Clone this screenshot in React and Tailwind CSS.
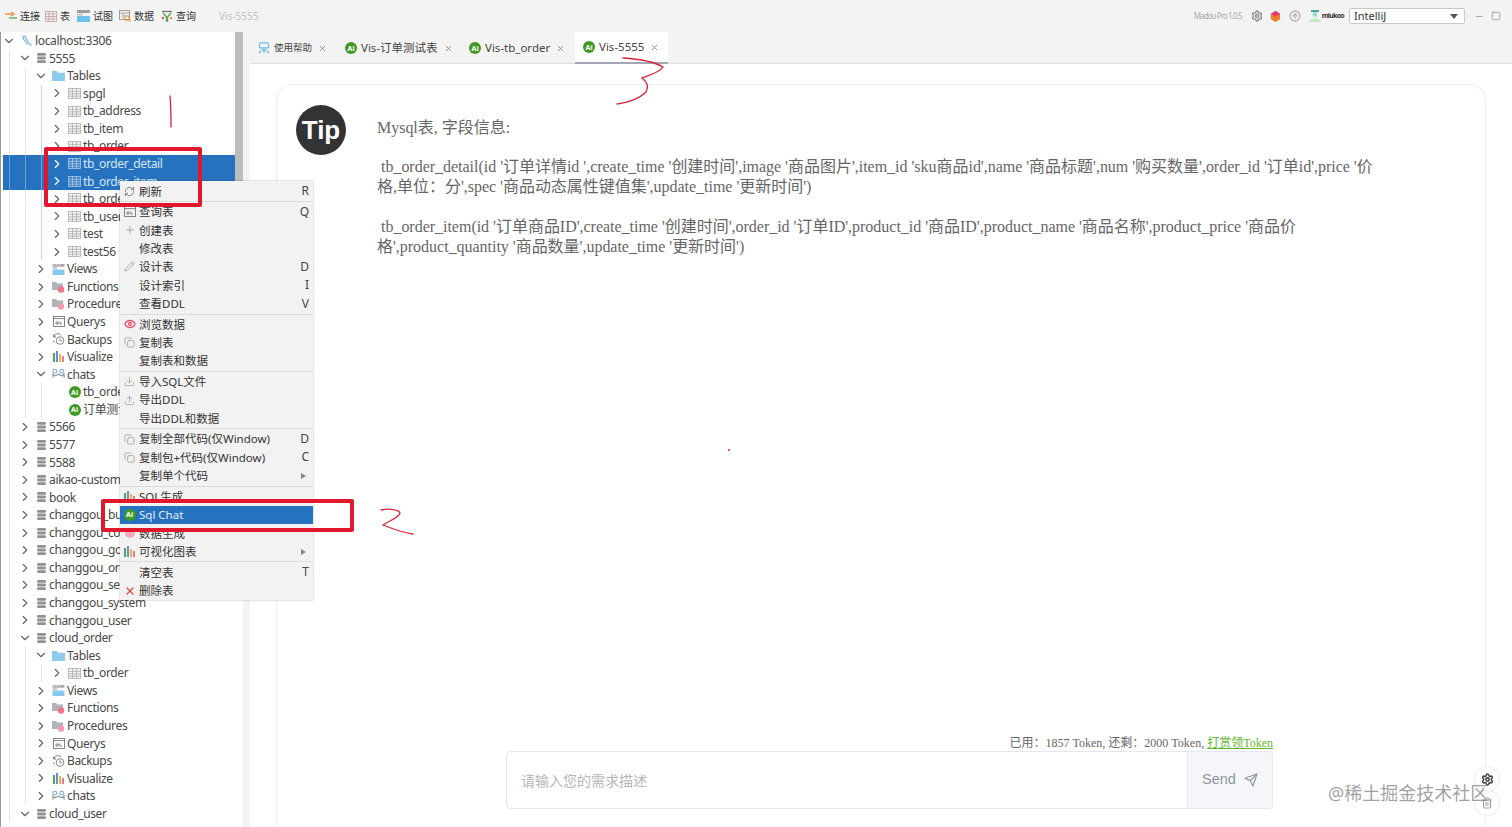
import {
  ArrowUpCircle,
  ChevronDown,
  ChevronRight,
  Copy,
  Download,
  Eye,
  Minus,
  Pencil,
  Plus,
  RefreshCw,
  Send,
  Settings,
  Square,
  Trash2,
  Upload,
  X,
} from "lucide-react";

const AiBadge = ({ size = "w-3 h-3" }) => (
  <span className={`${size} rounded-full bg-[#3f9a23] text-white text-[7px] font-bold leading-none flex items-center justify-center shrink-0`}>
    Ai
  </span>
);

const TableIcon = ({ selected }) => (
  <svg viewBox="0 0 13 11" className="w-[13px] h-[11px]" fill="none" stroke={selected ? "#a9c6e4" : "#adadad"} strokeWidth="0.8">
    <rect x="0.5" y="0.5" width="12" height="10" fill={selected ? "#3f82c6" : "#f4f4f4"} />
    <path d="M0.5 3.3h12M0.5 5.8h12M0.5 8.2h12M4.5 0.5v10M8.5 0.5v10" />
  </svg>
);

const DbIcon = () => (
  <svg viewBox="0 0 9 12" className="w-[9px] h-3 -ml-[2px]" fill="#929292">
    <rect x="0" y="1" width="9" height="2.8" rx="1.3" />
    <rect x="0" y="4.6" width="9" height="2.8" rx="1.3" />
    <rect x="0" y="8.2" width="9" height="2.8" rx="1.3" />
  </svg>
);

const FolderIcon = () => (
  <svg viewBox="0 0 14 12" className="w-[13px] h-[11px]" fill="#8ccbec">
    <path d="M0 1h5l1.5 2H14v9H0z" />
  </svg>
);

const ViewsIcon = () => (
  <svg viewBox="0 0 13 12" className="w-[13px] h-[11px]">
    <rect width="13" height="3" fill="#a8a8a8" />
    <path d="M1 1h1.5M4 1h1.5M7 1h1.5" stroke="#fff" strokeWidth="1" />
    <rect y="3.5" width="5" height="2" fill="#c4c4c4" />
    <rect y="6" width="13" height="6" fill="#86cbee" />
  </svg>
);

const DotFolderIcon = ({ letter }) => (
  <svg viewBox="0 0 13 12" className="w-[13px] h-[12px]">
    <path d="M0 1h4l1.5 1.5H11V9H0z" fill="#aeb4ba" />
    <circle cx="9" cy="8.5" r="3.2" fill={letter === "f" ? "#f0738a" : "#f49aaa"} />
  </svg>
);

const QueryIcon = () => (
  <svg viewBox="0 0 12 11" className="w-3 h-[11px]" fill="none" stroke="#777" strokeWidth="0.9">
    <rect x="0.5" y="0.5" width="11" height="10" />
    <path d="M0.5 2.6h11M3 6h2.2v2H3zM7 5.4V8h2" />
  </svg>
);

const BackupIcon = () => (
  <svg viewBox="0 0 13 12" className="w-[13px] h-3" fill="none" stroke="#777" strokeWidth="0.9">
    <path d="M2 4a4 4 0 0 1 7-2M1.5 1.5V4H4" />
    <circle cx="8" cy="7.5" r="3.8" />
    <path d="M8 5.4v2.3h1.8M1.5 7.5a4 4 0 0 0 1 2" />
  </svg>
);

const ChartIcon = () => (
  <svg viewBox="0 0 12 11" className="w-3 h-[11px]">
    <rect x="0" y="2" width="2" height="9" fill="#4aa564" />
    <rect x="3" y="0" width="2" height="11" fill="#6d8bd0" />
    <rect x="6" y="3" width="2" height="8" fill="#efb04c" />
    <rect x="9" y="5" width="2" height="6" fill="#e77b8f" />
  </svg>
);

const ChatsIcon = () => (
  <svg viewBox="0 0 14 12" className="w-[13px] h-3" fill="none" strokeWidth="1.1">
    <circle cx="3" cy="3" r="2" stroke="#7aa5d8" />
    <circle cx="10.5" cy="3" r="2" stroke="#7aa5d8" />
    <path d="M1 10V6l2.5 2L7 6l3 2 3-2v4" stroke="#7d8b99" />
  </svg>
);

const HostIcon = () => (
  <svg viewBox="0 0 12 12" className="w-3 h-3" fill="none" stroke="#6fa9dd" strokeWidth="1.1">
    <path d="M1.5 1.5 4 1l3.5 7 3 2.5M1.5 1.5 3 4.5l3.5 5" />
  </svg>
);

const treeIcon = (row) => {
  switch (row.icon) {
    case "host":
      return <HostIcon />;
    case "db":
      return <DbIcon />;
    case "folder":
      return <FolderIcon />;
    case "table":
      return <TableIcon selected={row.selected} />;
    case "views":
      return <ViewsIcon />;
    case "func":
      return <DotFolderIcon letter="f" />;
    case "proc":
      return <DotFolderIcon letter="p" />;
    case "query":
      return <QueryIcon />;
    case "backup":
      return <BackupIcon />;
    case "chart":
      return <ChartIcon />;
    case "chats":
      return <ChatsIcon />;
    default:
      return <AiBadge />;
  }
};

// gap between icon and label for each tree depth
const labelGap = ["ml-[2px]", "ml-0", "ml-[2px]", "ml-[2px]"];

const folderChildren = (tablesOpen) => [
  { level: 2, label: "Views", icon: "views" },
  { level: 2, label: "Functions", icon: "func" },
  { level: 2, label: "Procedures", icon: "proc" },
  { level: 2, label: "Querys", icon: "query" },
  { level: 2, label: "Backups", icon: "backup" },
  { level: 2, label: "Visualize", icon: "chart" },
  { level: 2, label: "chats", icon: "chats", open: tablesOpen },
];

const treeRows = [
  { level: 0, label: "localhost:3306", icon: "host", open: true },
  { level: 1, label: "5555", icon: "db", open: true },
  { level: 2, label: "Tables", icon: "folder", open: true },
  { level: 3, label: "spgl", icon: "table", blue: true },
  { level: 3, label: "tb_address", icon: "table", blue: true },
  { level: 3, label: "tb_item", icon: "table", blue: true },
  { level: 3, label: "tb_order", icon: "table", blue: true },
  { level: 3, label: "tb_order_detail", icon: "table", blue: true, selected: true },
  { level: 3, label: "tb_order_item", icon: "table", blue: true, selected: true },
  { level: 3, label: "tb_order_log", icon: "table", blue: true },
  { level: 3, label: "tb_user", icon: "table", blue: true },
  { level: 3, label: "test", icon: "table", blue: true },
  { level: 3, label: "test56", icon: "table", blue: true },
  ...folderChildren(true),
  { level: 3, label: "tb_order", icon: "ai", leaf: true },
  { level: 3, label: "订单测试表", icon: "ai", leaf: true },
  { level: 1, label: "5566", icon: "db" },
  { level: 1, label: "5577", icon: "db" },
  { level: 1, label: "5588", icon: "db" },
  { level: 1, label: "aikao-customer", icon: "db" },
  { level: 1, label: "book", icon: "db" },
  { level: 1, label: "changgou_business", icon: "db" },
  { level: 1, label: "changgou_content", icon: "db" },
  { level: 1, label: "changgou_goods", icon: "db" },
  { level: 1, label: "changgou_order", icon: "db" },
  { level: 1, label: "changgou_seckill", icon: "db" },
  { level: 1, label: "changgou_system", icon: "db" },
  { level: 1, label: "changgou_user", icon: "db" },
  { level: 1, label: "cloud_order", icon: "db", open: true },
  { level: 2, label: "Tables", icon: "folder", open: true },
  { level: 3, label: "tb_order", icon: "table" },
  ...folderChildren(false),
  { level: 1, label: "cloud_user", icon: "db", open: true },
];

const TreeRow = ({ row }) => {
  const Chevron = row.open ? ChevronDown : ChevronRight;
  return (
    <div
      className={`flex items-stretch h-[17.57px] pl-[6px] shrink-0 ${
        row.selected ? "bg-[#2672bf] text-[#d5e6f7]" : "text-[#484848]"
      }`}
    >
      {Array.from({ length: row.level }).map((_, i) => (
        <span
          key={i}
          className={`w-4 border-l ${
            row.selected
              ? "border-[#6fa3d8]"
              : row.blue && i === 2
              ? "border-[#bcdcf3]"
              : "border-[#e6e6e6]"
          }`}
        />
      ))}
      <span className="w-4 -ml-2 flex items-center justify-center shrink-0">
        {!row.leaf && (
          <Chevron
            size={14}
            strokeWidth={2}
            className={row.selected ? "text-white" : "text-[#666]"}
          />
        )}
      </span>
      <span className="ml-[3px] w-[13px] flex items-center justify-center shrink-0">
        {treeIcon(row)}
      </span>
      <span className={`${labelGap[row.level]} text-[12px] tracking-[-0.35px] leading-[17px] whitespace-nowrap`}>
        {row.label}
      </span>
    </div>
  );
};

const Separator = () => (
  <div className="h-[2.2px] flex items-center">
    <div className="h-px w-full bg-[#dcdcdc]" />
  </div>
);

const menuGroups = [
  [{ label: "刷新", key: "R", icon: <RefreshCw size={11} className="text-[#777]" /> }],
  [
    { label: "查询表", key: "Q", icon: <QueryIcon /> },
    { label: "创建表", icon: <Plus size={12} className="text-[#aaa]" /> },
    { label: "修改表" },
    { label: "设计表", key: "D", icon: <Pencil size={11} className="text-[#aaa]" /> },
    { label: "设计索引", key: "I" },
    { label: "查看DDL", key: "V" },
  ],
  [
    { label: "浏览数据", icon: <Eye size={12} className="text-[#e0566f]" strokeWidth={2.6} /> },
    { label: "复制表", icon: <Copy size={11} className="text-[#aaa]" /> },
    { label: "复制表和数据" },
  ],
  [
    { label: "导入SQL文件", icon: <Download size={11} className="text-[#aaa]" /> },
    { label: "导出DDL", icon: <Upload size={11} className="text-[#aaa]" /> },
    { label: "导出DDL和数据" },
  ],
  [
    { label: "复制全部代码(仅Window)", key: "D", icon: <Copy size={11} className="text-[#aaa]" /> },
    { label: "复制包+代码(仅Window)", key: "C", icon: <Copy size={11} className="text-[#aaa]" /> },
    { label: "复制单个代码", sub: true },
  ],
  [
    { label: "SQL生成", icon: <ChartIcon /> },
    { label: "Sql Chat", active: true, icon: <AiBadge /> },
    { label: "数据生成", icon: <span className="w-2.5 h-2.5 rounded-full bg-[#f0a9bb]" /> },
    { label: "可视化图表", sub: true, icon: <ChartIcon /> },
  ],
  [
    { label: "清空表", key: "T" },
    { label: "删除表", icon: <X size={12} strokeWidth={2.6} className="text-[#d9453f]" /> },
  ],
];

const MenuItem = ({ item }) => (
  <div
    className={`flex items-center h-[18.4px] text-[11.5px] ${
      item.active ? "bg-[#2672bf] text-[#e2eefa]" : "text-[#333]"
    }`}
  >
    <span className="w-[19px] flex items-center justify-center shrink-0">{item.icon}</span>
    <span className="flex-1 whitespace-nowrap">{item.label}</span>
    {item.key && <span className="pr-1 text-[12px] text-[#444]">{item.key}</span>}
    {item.sub && (
      <span className="mr-[7px] border-y-[3.5px] border-l-[5px] border-y-transparent border-l-[#888]" />
    )}
  </div>
);

const ContextMenu = () => (
  <div className="absolute left-[120px] top-[181px] w-[193px] h-[419px] bg-[#f2f2f2] shadow-[0_0_2px_rgba(0,0,0,0.3)] pt-px">
    {menuGroups.map((group, i) => (
      <div key={i}>
        {i > 0 && <Separator />}
        {group.map((item) => (
          <MenuItem key={item.label} item={item} />
        ))}
      </div>
    ))}
  </div>
);

const toolbarItems = [
  {
    label: "连接",
    width: "w-[40px]",
    icon: (
      <svg viewBox="0 0 12 10" className="w-3 h-2.5" fill="none" strokeWidth="1.3">
        <path d="M0 3h7" stroke="#e68a3c" />
        <path d="M12 7H4" stroke="#58a55c" />
        <path d="M6 1l3 2-3 2" stroke="#e68a3c" />
      </svg>
    ),
  },
  {
    label: "表",
    width: "w-[32px]",
    icon: (
      <svg viewBox="0 0 12 11" className="w-3 h-[11px]" fill="#f7eeee" stroke="#b89898" strokeWidth="0.7">
        <rect x="0.5" y="0.5" width="11" height="10" />
        <path d="M0.5 3h11M0.5 5.5h11M0.5 8h11M4 0.5v10M8 0.5v10" />
      </svg>
    ),
  },
  {
    label: "试图",
    width: "w-[42px]",
    icon: (
      <svg viewBox="0 0 13 12" className="w-[13px] h-3">
        <rect width="13" height="3" fill="#9e9e9e" />
        <rect y="3.6" width="6" height="2" fill="#c9c9c9" />
        <rect y="6" width="13" height="6" fill="#6cc0ea" />
      </svg>
    ),
  },
  {
    label: "数据",
    width: "w-[42px]",
    icon: (
      <svg viewBox="0 0 12 12" className="w-3 h-3" fill="none" stroke="#8a8a8a" strokeWidth="0.8">
        <rect x="0.5" y="0.5" width="10" height="9" />
        <path d="M0.5 3h10M3 5h3M3 7h2" />
        <circle cx="8" cy="8" r="2.2" stroke="#e8912d" strokeWidth="1.1" />
        <path d="M9.6 9.6 11.5 11.5" stroke="#e8912d" strokeWidth="1.1" />
      </svg>
    ),
  },
  {
    label: "查询",
    width: "w-[38px]",
    icon: (
      <svg viewBox="0 0 12 12" className="w-3 h-3" fill="none" strokeWidth="1.4">
        <path d="M1 1.5h10" stroke="#7a7a7a" />
        <path d="M2 3l3.5 4v4h1V7L10 3" stroke="#58a55c" />
        <circle cx="2" cy="8" r="1.2" fill="#e0566f" stroke="none" />
        <circle cx="10" cy="8" r="1.2" fill="#e8912d" stroke="none" />
      </svg>
    ),
  },
];

const TopBar = () => (
  <div className="h-8 flex items-center bg-[#f3f3f3] shrink-0 pl-[5px]">
    <div className="flex items-center">
      {toolbarItems.map((item) => (
        <div key={item.label} className={`${item.width} flex items-center gap-[3px] text-[10px] text-[#333]`}>
          {item.icon}
          <span className="whitespace-nowrap">{item.label}</span>
        </div>
      ))}
    </div>
    <span className="ml-5 text-[10px] text-[#c2c2c2]">Vis-5555</span>
    <div className="ml-auto flex items-center">
      <span className="text-[8px] text-[#aaa] tracking-[-0.9px] whitespace-nowrap">Madou Pro 1.0.5</span>
      <Settings size={12} className="ml-[9px] text-[#888]" strokeWidth={2.6} />
      <svg viewBox="0 0 12 12" className="ml-[7px] w-[11px] h-[11px]">
        <path d="M6 0l5 3v6l-5 3-5-3V3z" fill="#ef7b28" />
        <path d="M6 0l5 3-5 3-5-3z" fill="#e0367b" />
      </svg>
      <ArrowUpCircle size={12} className="ml-[8px] text-[#b6b6b6]" strokeWidth={2.6} />
      <svg viewBox="0 0 12 12" className="ml-[8px] w-3 h-3">
        <rect x="2" y="0" width="8" height="2" fill="#4aa7a0" />
        <circle cx="6" cy="4.5" r="2.4" fill="#9adbc5" />
        <path d="M0 12c1-5 11-5 12 0z" fill="#bfe8c8" />
      </svg>
      <span className="ml-[1px] text-[7px] font-bold tracking-[-0.7px] text-[#333]">miukoo</span>
      <div className="ml-[5px] w-[116px] h-4 bg-white border border-[#c8c8c8] rounded-[2px] flex items-center justify-between pl-[4px] pr-[6px] text-[11px] text-[#333]">
        <span>IntelliJ</span>
        <span className="border-x-[4px] border-t-[5px] border-x-transparent border-t-[#555]" />
      </div>
      <Minus size={11} className="ml-[9px] text-[#aaa]" />
      <Square size={10} className="ml-[6px] text-[#999]" />
      <X size={11} className="ml-[10px] mr-[-10px] text-[#999]" />
    </div>
  </div>
);

const tabs = [
  { label: "使用帮助", width: "w-[87px]", small: true },
  { label: "Vis-订单测试表", width: "w-[124px]" },
  { label: "Vis-tb_order", width: "w-[114px]" },
  { label: "Vis-5555", width: "w-[93px]", active: true },
];

const TabBar = () => (
  <div className="h-8 flex bg-[#f3f3f3] border-b border-[#dedede] shrink-0">
    {tabs.map((tab) => (
      <div
        key={tab.label}
        className={`${tab.width} h-8 flex items-center pl-2 ${
          tab.active ? "bg-white border-b-2 border-[#a3a7b5]" : ""
        }`}
      >
        {tab.small ? (
          <svg viewBox="0 0 12 12" className="w-3 h-3 shrink-0" fill="none" stroke="#6db7e6" strokeWidth="1.2">
            <rect x="1.5" y="0.8" width="9" height="5" rx="1" />
            <path d="M3 8h6M1 11l2-2M11 11 9 9M6 6v5" />
          </svg>
        ) : (
          <AiBadge />
        )}
        <span className={`ml-1 whitespace-nowrap text-[#444] ${tab.small ? "text-[9.5px]" : "text-[11.5px]"}`}>
          {tab.label}
        </span>
        <X size={9} className="ml-[6px] text-[#777] shrink-0" />
      </div>
    ))}
  </div>
);

const Conversation = () => (
  <div className="flex pl-[19px] pt-5">
    <div className="w-[50px] h-[50px] rounded-full bg-[#333] text-white text-[26px] font-bold font-['Liberation_Sans',sans-serif] flex items-center justify-center shrink-0">
      Tip
    </div>
    <div className="ml-[31px] pt-[13px] text-[16px] leading-5 tracking-[-0.02px] text-[#666] font-['Liberation_Serif','Noto_Sans_CJK_SC',serif] whitespace-nowrap">
      <p>Mysql表, 字段信息:</p>
      <p className="mt-[19px] pl-1">
        tb_order_detail(id '订单详情id ',create_time '创建时间',image '商品图片',item_id 'sku商品id',name '商品标题',num '购买数量',order_id '订单id',price '价
      </p>
      <p>格,单位：分',spec '商品动态属性键值集',update_time '更新时间')</p>
      <p className="mt-5 pl-1">
        tb_order_item(id '订单商品ID',create_time '创建时间',order_id '订单ID',product_id '商品ID',product_name '商品名称',product_price '商品价
      </p>
      <p>格',product_quantity '商品数量',update_time '更新时间')</p>
    </div>
  </div>
);

const Composer = () => (
  <div className="mt-auto ml-[229px] mr-[212px] mb-4">
    <div className="text-right text-[12px] leading-4 text-[#666] font-['Liberation_Serif','Noto_Sans_CJK_SC',serif]">
      已用：1857 Token, 还剩：2000 Token,{" "}
      <span className="text-[#5fb832] underline">打赏领Token</span>
    </div>
    <div className="h-[58px] flex border border-[#e4e7ed] rounded-[4px] bg-white overflow-hidden">
      <div className="flex-1 pl-[14px] flex items-center text-[14px] text-[#b5b5b5]">请输入您的需求描述</div>
      <div className="w-[85px] bg-[#f4f6fa] border-l border-[#e4e7ed] flex items-center justify-center gap-2 text-[14.5px] text-[#8f959e] font-['Liberation_Sans',sans-serif]">
        Send
        <Send size={14} />
      </div>
    </div>
  </div>
);

const Annotations = () => (
  <>
    <div className="absolute left-[44px] top-[147px] w-[158px] h-[60px] border-4 border-[#e1182c] rounded-[2px]" />
    <div className="absolute left-[101px] top-[499px] w-[253px] h-[33px] border-4 border-[#e1182c] rounded-[2px]" />
    <svg className="absolute inset-0 w-[1512px] h-[827px] pointer-events-none" fill="none" stroke="#d8233a" strokeWidth="1.3" strokeLinecap="round">
      <path d="M170 96c1 10 1 20 1 31" />
      <path d="M623 58c16 1 30 3 40 9-4 6-14 8-21 11 5 4 7 9 4 14-6 6-18 11-29 12" />
      <path d="M381 510c8-2 18 0 19 3 0 4-11 8-17 12 10 4 20 8 30 9" />
      <circle cx="729" cy="450" r="0.4" />
    </svg>
  </>
);

const App = () => (
  <div className="relative w-[1512px] h-[827px] overflow-hidden bg-[#f3f3f3] font-['Noto_Sans','Noto_Sans_CJK_SC',sans-serif]">
    <TopBar />
    <div className="flex h-[795px]">
      <aside className="w-[250px] flex shrink-0 border-l border-[#9a9a9a]">
        <div className="w-[234px] pl-[2px] bg-white overflow-hidden flex flex-col">
          {treeRows.map((row, i) => (
            <TreeRow key={i} row={row} />
          ))}
        </div>
        <div className="w-2 bg-white">
          <div className="h-[250px] bg-[#bdbdbd]" />
        </div>
      </aside>
      <main className="flex-1 flex flex-col bg-white">
        <TabBar />
        <div className="flex-1 flex flex-col mt-5 mx-[26px] mb-[2px] border border-b-0 border-[#eeeeee] rounded-t-2xl">
          <Conversation />
          <Composer />
        </div>
      </main>
    </div>
    <ContextMenu />
    <Annotations />
    <div className="absolute left-[1475px] top-[767px] w-6 h-6 rounded-full bg-white shadow-[0_0_3px_rgba(0,0,0,0.15)] flex items-center justify-center">
      <Settings size={13} strokeWidth={2.8} className="text-[#444]" />
    </div>
    <div className="absolute left-[1475px] top-[791px] w-6 h-6 rounded-full bg-white shadow-[0_0_3px_rgba(0,0,0,0.15)] flex items-center justify-center">
      <Trash2 size={12} className="text-[#999]" />
    </div>
    <div className="absolute left-[1328px] top-[781px] text-[18px] leading-6 text-[#777]/70 whitespace-nowrap">
      @稀土掘金技术社区
    </div>
  </div>
);

export default App;
